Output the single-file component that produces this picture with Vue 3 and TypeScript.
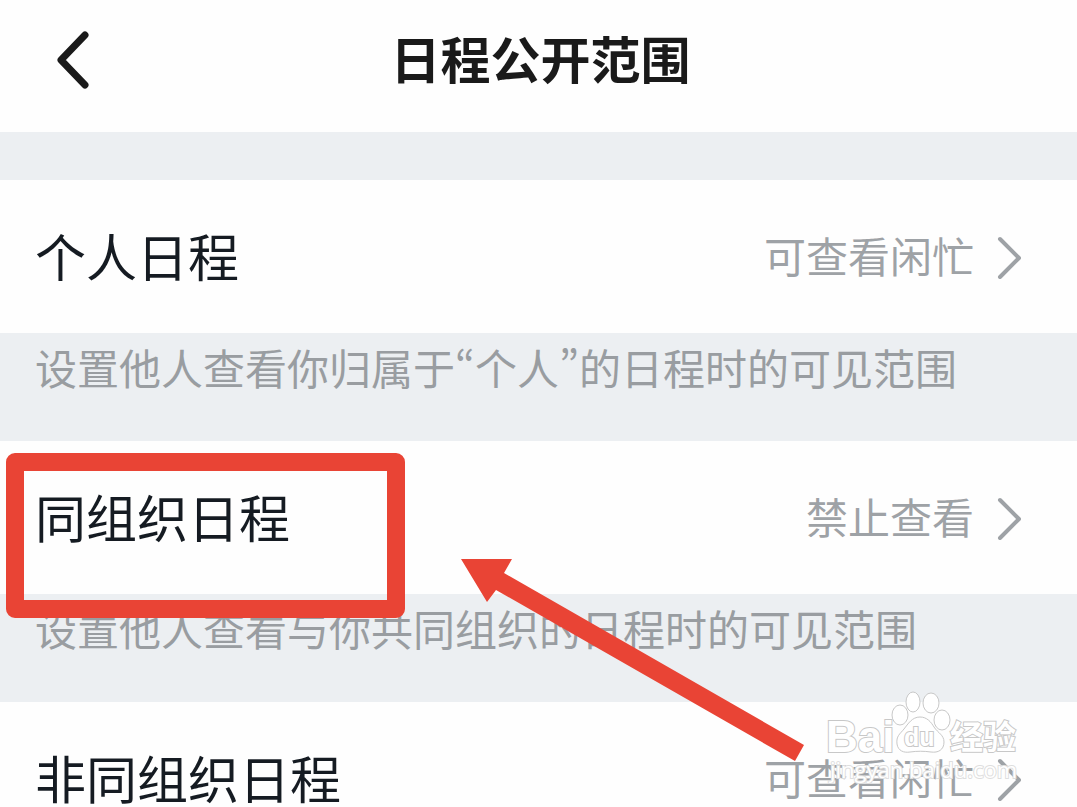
<script setup lang="ts">
interface Scope {
  id: string
  label: string
  value: string
  note?: string
  marked?: boolean
}

const scopes: Scope[] = [
  {
    id: 'personal',
    label: '个人日程',
    value: '可查看闲忙',
    note: '设置他人查看你归属于“个人”的日程时的可见范围',
  },
  {
    id: 'same-org',
    label: '同组织日程',
    value: '禁止查看',
    note: '设置他人查看与你共同组织的日程时的可见范围',
    marked: true,
  },
  { id: 'other-org', label: '非同组织日程', value: '可查看闲忙' },
]
</script>

<template>
  <div class="page">
    <header class="header">
      <button class="back" type="button" aria-label="返回">
        <svg width="40" height="64" viewBox="0 0 40 64" aria-hidden="true">
          <path d="M33 7 L9 32 L33 57" fill="none" stroke="#1a1a1a" stroke-width="7" stroke-linecap="round" stroke-linejoin="round" />
        </svg>
      </button>
      <h1 class="title">日程公开范围</h1>
    </header>

    <main class="list">
      <section v-for="scope in scopes" :key="scope.id" class="group" :class="{ marked: scope.marked }">
        <button class="row" type="button">
          <span class="label">{{ scope.label }}</span>
          <span class="value">{{ scope.value }}</span>
          <svg class="chevron" width="28" height="44" viewBox="0 0 28 44" aria-hidden="true">
            <path d="M4 4 L23 23 L4 42" fill="none" stroke="#9ea2a6" stroke-width="4" stroke-linecap="round" stroke-linejoin="round" />
          </svg>
        </button>
        <p v-if="scope.note" class="note">{{ scope.note }}</p>
        <template v-if="scope.marked">
          <div class="frame"></div>
          <svg class="arrow" width="344" height="203" viewBox="0 0 344 203" aria-hidden="true">
            <path d="M0 0 H51 L43 14 L343 186 L334 202 L35 31 L26 43 Z" fill="#e94435" />
          </svg>
        </template>
      </section>
    </main>

    <svg class="watermark" width="200" height="96" viewBox="0 0 200 96" aria-hidden="true">
      <g class="outline">
        <text class="brand" x="0" y="65" font-size="44">Bai</text>
        <ellipse cx="74" cy="28" rx="8" ry="10" />
        <ellipse cx="87" cy="15" rx="7" ry="10" />
        <ellipse cx="105" cy="16" rx="8" ry="10" />
        <ellipse cx="116" cy="33" rx="8" ry="10" />
        <path d="M94 30 C86 30 82 37 78 42 C74 47 70 49 71 57 C72 64 78 66 84 65 C91 64 98 64 105 65 C112 66 118 63 118 55 C118 48 112 46 108 40 C105 35 101 30 94 30 Z" />
        <text class="du" x="78" y="59" font-size="25">du</text>
        <text class="experience" x="124" y="62" font-size="33">经验</text>
      </g>
      <text class="site" x="4" y="91" font-size="22">jingyan.baidu.com</text>
    </svg>
  </div>
</template>

<style>
body {
  margin: 0;
}
</style>

<style scoped>
.page {
  position: relative;
  height: 100vh;
  overflow: hidden;
  background: #eceff2;
  font-family: "Noto Sans", "Noto Sans CJK SC", sans-serif;
}

.header {
  display: grid;
  grid-template-columns: 96px 1fr 92px;
  align-items: center;
  height: 132px;
  padding-bottom: 12px;
  margin-bottom: 48px;
  box-sizing: border-box;
  background: #fefefe;
}

.back {
  display: flex;
  justify-content: flex-end;
  padding: 0 4px 0 0;
  border: 0;
  background: none;
  cursor: pointer;
}

.title {
  margin: 0;
  font-size: 50px;
  line-height: 72px;
  font-weight: 700;
  text-align: center;
  color: #1a1a1a;
}

.group {
  position: relative;
}

.marked {
  z-index: 1;
}

.row {
  display: flex;
  align-items: center;
  width: 100%;
  height: 153px;
  padding: 0 53px 0 35px;
  border: 0;
  background: #fefefe;
  font-family: inherit;
  text-align: left;
  cursor: pointer;
}

.label {
  flex: 1;
  font-size: 51px;
  line-height: 70px;
  color: #151b22;
}

.value {
  font-size: 42px;
  line-height: 60px;
  color: #9ea2a6;
}

.chevron {
  margin-left: 22px;
}

.note {
  height: 108px;
  margin: 0;
  padding: 4px 35px 0;
  box-sizing: border-box;
  font-family: "Noto Sans CJK SC", sans-serif;
  font-feature-settings: "pwid";
  font-size: 42px;
  line-height: 60px;
  color: #999da1;
}

.frame {
  position: absolute;
  top: 12px;
  left: 6px;
  width: 399px;
  height: 165px;
  box-sizing: border-box;
  border: 18px solid #e94435;
  border-radius: 9px;
}

.arrow {
  position: absolute;
  top: 118px;
  left: 461px;
}

.watermark {
  position: absolute;
  z-index: 2;
  right: 51px;
  bottom: 24px;
  overflow: visible;
}

.outline {
  fill: #ffffff;
  stroke: #c8c8c8;
  stroke-width: 1;
}

.outline text {
  paint-order: stroke;
  stroke-width: 2;
}

.brand,
.du {
  font-family: "Liberation Sans", sans-serif;
  font-weight: 700;
}

.experience {
  font-family: "Noto Sans CJK SC", sans-serif;
  font-weight: 700;
}

.site {
  font-family: "Open Sans", sans-serif;
  fill: #ffffff;
  stroke: #dedede;
  stroke-width: 2;
  paint-order: stroke;
}
</style>
